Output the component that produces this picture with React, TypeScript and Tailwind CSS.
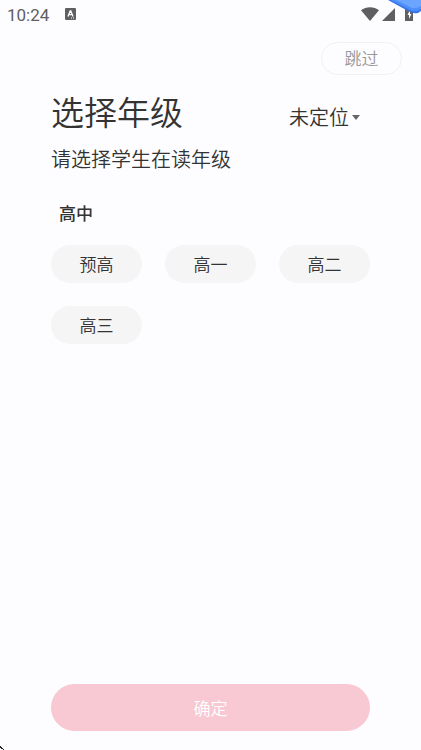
const grades = ["预高", "高一", "高二", "高三"];

function StatusBar() {
  return (
    <header className="flex h-7 items-center justify-between pl-[7px] pr-2 text-[#5f5f61]">
      <div className="flex items-center gap-4">
        <time className="pt-0.5 font-[Roboto,sans-serif] text-[17px] leading-5 font-normal">10:24</time>
        <svg width="11" height="12" viewBox="0 0 11 12" aria-hidden="true">
          <rect width="11" height="12" rx="1" fill="currentColor" />
          <path d="M3 8.5 5.2 3h.6L8 8.500M3.900 6.700h3.200" fill="none" stroke="#fff" strokeWidth="1.300" />
          <path d="M6 10h1M8 10h1" stroke="#fff" strokeWidth="1" />
        </svg>
      </div>
      <div className="flex items-center">
        <svg width="18" height="14" viewBox="0 0 18 14" className="mr-[3px]" aria-hidden="true">
          <path d="M0 3.200C5-.900 13-.900 18 3.200L9 14Z" fill="currentColor" />
        </svg>
        <svg width="13" height="13" viewBox="0 0 13 13" className="mr-2.5" aria-hidden="true">
          <path d="M13 0v13H0Z" fill="currentColor" />
        </svg>
        <svg width="8" height="13" viewBox="0 0 8 13" aria-hidden="true">
          <path d="M0 0h8v13H0Z" fill="currentColor" />
          <path d="M5 2 2.500 7h1.500v4L6.500 6H5Z" fill="#fff" />
        </svg>
      </div>
    </header>
  );
}

export default function App() {
  return (
    <div className="relative flex min-h-screen flex-col overflow-hidden bg-[#fdfdff] font-['Noto_Sans_CJK_SC',sans-serif] font-[350] text-[#333]">
      <StatusBar />
      <svg className="absolute top-0 right-0" width="34" height="15" viewBox="0 0 34 15" aria-hidden="true">
        <path d="M1 0 22 11.500Q26 14 31 13L34 11V0Z" fill="#3974e6" />
        <path d="M4 0 23 10Q27 12 31 11L34 9V0Z" fill="#4e8ffb" />
        <path d="M9 0 25 8Q29 9 34 6V0Z" fill="#6ba5ff" />
      </svg>
      <div className="mt-3.5 flex justify-end pr-[19px]">
        <button type="button" className="h-[33px] w-[81px] rounded-full border border-[#f1f1f3] pb-0.5 text-[17px] leading-6 text-[#999]">
          跳过
        </button>
      </div>
      <main className="flex flex-1 flex-col px-[51px] pt-4 pb-[19px]">
        <div className="flex items-center justify-between">
          <h1 className="text-[33px] leading-10">选择年级</h1>
          <button type="button" className="mt-3 mr-2.5 flex items-center gap-[3px] text-[20px] leading-7">
            未定位
            <svg width="8" height="5" viewBox="0 0 8 5" aria-hidden="true">
              <path d="M0 0h8L4 5Z" fill="#666" />
            </svg>
          </button>
        </div>
        <p className="mt-3.5 text-[20px] leading-7">请选择学生在读年级</p>
        <h2 className="mt-7 ml-2 text-[17px] leading-6 font-medium">高中</h2>
        <div className="mt-5 grid grid-cols-3 gap-[23px]">
          {grades.map((grade) => (
            <button key={grade} type="button" className="h-[38px] rounded-full bg-[#f5f5f5] text-[17px] leading-6">
              {grade}
            </button>
          ))}
        </div>
        <button type="button" className="mt-auto h-[47px] rounded-full bg-[#f8c9d2] text-[17px] leading-6 text-white">
          确定
        </button>
      </main>
      <svg className="absolute bottom-0 left-0" width="4" height="4" viewBox="0 0 4 4" aria-hidden="true">
        <path d="M0 0h1v1h1v1h1v1h1v1H3V3H1V2H0Z" fill="#222" />
      </svg>
    </div>
  );
}
